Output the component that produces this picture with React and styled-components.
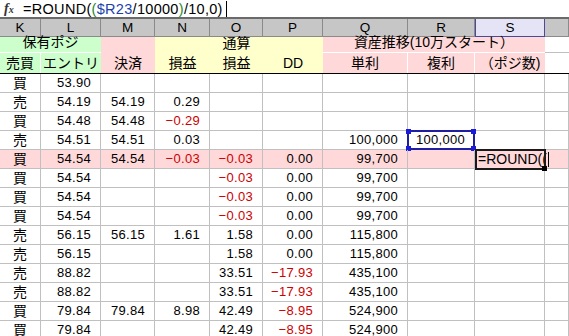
import React from "react";
import styled, { createGlobalStyle } from "styled-components";

const COLS = "41px 60px 54px 55px 53px 60px 85px 67px 70px 1fr";
const GREEN = "#ccffcc";
const PINK = "#ffd9d9";
const YELLOW = "#ffffcc";
const RED = "#cc0000";

const GlobalStyle = createGlobalStyle`
    html, body {
        margin: 0;
        padding: 0;
        background: #fff;
    }
    body {
        font-family: "Liberation Sans", "Noto Sans CJK JP", sans-serif;
        color: #000;
        overflow: hidden;
    }
`;

const letters = ["K", "L", "M", "N", "O", "P", "Q", "R", "S", ""];

const rows = [
    ["買", "53.90", "", "", "", "", "", "", ""],
    ["売", "54.19", "54.19", "0.29", "", "", "", "", ""],
    ["買", "54.48", "54.48", "-0.29", "", "", "", "", ""],
    ["売", "54.51", "54.51", "0.03", "", "", "100,000", "100,000", ""],
    ["買", "54.54", "54.54", "-0.03", "-0.03", "0.00", "99,700", "", ""],
    ["買", "54.54", "", "", "-0.03", "0.00", "99,700", "", ""],
    ["買", "54.54", "", "", "-0.03", "0.00", "99,700", "", ""],
    ["買", "54.54", "", "", "-0.03", "0.00", "99,700", "", ""],
    ["売", "56.15", "56.15", "1.61", "1.58", "0.00", "115,800", "", ""],
    ["売", "56.15", "", "", "1.58", "0.00", "115,800", "", ""],
    ["売", "88.82", "", "", "33.51", "-17.93", "435,100", "", ""],
    ["売", "88.82", "", "", "33.51", "-17.93", "435,100", "", ""],
    ["買", "79.84", "79.84", "8.98", "42.49", "-8.95", "524,900", "", ""],
    ["買", "79.84", "", "", "42.49", "-8.95", "524,900", "", ""],
];

function App() {
    return (
        <>
            <GlobalStyle />
            <Sheet>
                <FormulaBar>
                    <FxIcon>
                        f<small>x</small>
                    </FxIcon>
                    <Formula>
                        =ROUND(<Ref $c="#1f8a1f">(</Ref>
                        <Ref $c="#1c3fae">$R23</Ref>/10000
                        <Ref $c="#1f8a1f">)</Ref>/10,0)
                    </Formula>
                    <Caret />
                </FormulaBar>
                <ColHeader>
                    {letters.map((l, i) => (
                        <ColLetter key={i} $active={l === "S"}>
                            {l}
                        </ColLetter>
                    ))}
                </ColHeader>
                <HeadGrid>
                    <HeadCell $col="1 / 3" $row="1" $bg={GREEN} $line>
                        保有ポジ
                    </HeadCell>
                    <HeadCell $col="1" $row="2" $bg={GREEN} $sep>
                        売買
                    </HeadCell>
                    <HeadCell $col="2" $row="2" $bg={GREEN}>
                        エントリ
                    </HeadCell>
                    <HeadCell $col="3" $row="1 / 3" $bg={PINK}>
                        決済
                    </HeadCell>
                    <HeadCell $col="4" $row="1 / 3" $bg={YELLOW}>
                        損益
                    </HeadCell>
                    <HeadCell $col="5" $row="1" $bg={YELLOW}>
                        通算
                    </HeadCell>
                    <HeadCell $col="5" $row="2" $bg={YELLOW}>
                        損益
                    </HeadCell>
                    <HeadCell $col="6" $row="1 / 3" $bg={YELLOW}>
                        DD
                    </HeadCell>
                    <HeadCell $col="7 / 10" $row="1" $bg={PINK} $line>
                        資産推移(10万スタート）
                    </HeadCell>
                    <HeadCell $col="7" $row="2" $bg={PINK} $sep>
                        単利
                    </HeadCell>
                    <HeadCell $col="8" $row="2" $bg={PINK} $sep>
                        複利
                    </HeadCell>
                    <HeadCell $col="9" $row="2" $bg={PINK}>
                        （ポジ数)
                    </HeadCell>
                    <BlankHead $row="1" />
                    <BlankHead $row="2" />
                </HeadGrid>
                {rows.map((r, ri) => (
                    <Row key={ri} $bg={ri === 4 ? PINK : "#fff"}>
                        {r.map((v, ci) => {
                            const neg = v.startsWith("-");
                            const text = neg ? "−" + v.slice(1) : v;
                            if (ri === 3 && ci === 7) {
                                return (
                                    <Cell key={ci}>
                                        {text}
                                        <SelectBox>
                                            <Handle $pos="tl" />
                                            <Handle $pos="tr" />
                                            <Handle $pos="bl" />
                                            <Handle $pos="br" />
                                        </SelectBox>
                                    </Cell>
                                );
                            }
                            if (ri === 4 && ci === 8) {
                                return (
                                    <EditCell key={ci}>
                                        =ROUND((
                                        <EditCaret />
                                        <EditBox />
                                        <FillHandle />
                                    </EditCell>
                                );
                            }
                            return (
                                <Cell
                                    key={ci}
                                    $center={ci === 0}
                                    $color={neg ? RED : "#000"}
                                >
                                    {text}
                                </Cell>
                            );
                        })}
                        <Cell />
                    </Row>
                ))}
            </Sheet>
        </>
    );
}

export default App;

const Sheet = styled.div`
    width: 569px;
    height: 336px;
    overflow: hidden;
    background: #fff;
`;
const FormulaBar = styled.div`
    height: 17px;
    display: flex;
    align-items: center;
    border-bottom: 2px solid #6a6a6a;
    background: #fff;
`;
const FxIcon = styled.span`
    width: 19px;
    padding-left: 4px;
    font-family: "Liberation Serif", serif;
    font-style: italic;
    font-weight: bold;
    font-size: 14px;
    color: #333;
    small {
        font-size: 10px;
    }
`;
const Formula = styled.span`
    font-size: 14.5px;
    letter-spacing: 0.3px;
    white-space: nowrap;
`;
const Ref = styled.span`
    color: ${(p) => p.$c};
`;
const Caret = styled.span`
    width: 1px;
    height: 16px;
    margin-left: 3px;
    background: #000;
`;
const ColHeader = styled.div`
    display: grid;
    grid-template-columns: ${COLS};
    height: 18px;
    background: #c6c6c6;
`;
const ColLetter = styled.div`
    box-sizing: border-box;
    border-right: 1px solid #8a8a8a;
    border-bottom: 1px solid #8a8a8a;
    background: ${(p) => (p.$active ? "#e4e4f6" : "transparent")};
    ${(p) => p.$active && "border: 1px solid #4a4a96; border-top: none;"}
    text-align: center;
    font-size: 13.5px;
    line-height: 17px;
`;
const HeadGrid = styled.div`
    display: grid;
    grid-template-columns: ${COLS};
    grid-template-rows: 16px 20px;
    border-bottom: 1px solid #000;
`;
const HeadCell = styled.div`
    grid-column: ${(p) => p.$col};
    grid-row: ${(p) => p.$row};
    box-sizing: border-box;
    background: ${(p) => p.$bg};
    border-bottom: ${(p) => (p.$line ? "1px solid #fff" : "none")};
    border-right: ${(p) => (p.$sep ? "1px solid #fff" : "none")};
    display: flex;
    align-items: flex-end;
    justify-content: center;
    font-size: 14px;
    line-height: 17px;
    padding-bottom: 1px;
    white-space: nowrap;
`;
const BlankHead = styled.div`
    grid-column: 10;
    grid-row: ${(p) => p.$row};
    border-bottom: ${(p) => (p.$row === "1" ? "1px solid #c0c0c0" : "none")};
`;
const Row = styled.div`
    display: grid;
    grid-template-columns: ${COLS};
    height: 19px;
    background: ${(p) => p.$bg};
`;
const Cell = styled.div`
    position: relative;
    box-sizing: border-box;
    border-right: 1px solid #c0c0c0;
    border-bottom: 1px solid #c0c0c0;
    text-align: ${(p) => (p.$center ? "center" : "right")};
    padding-right: ${(p) => (p.$center ? "0" : "9px")};
    font-size: ${(p) => (p.$center ? "14px" : "13px")};
    letter-spacing: ${(p) => (p.$center ? "0" : "0.3px")};
    line-height: 18px;
    color: ${(p) => p.$color || "#000"};
    white-space: nowrap;
`;
const SelectBox = styled.div`
    position: absolute;
    left: -1px;
    top: -1px;
    right: -1px;
    bottom: -1px;
    border: 2px solid #1e1ea0;
    pointer-events: none;
`;
const Handle = styled.span`
    position: absolute;
    width: 5px;
    height: 5px;
    background: #1c1cd8;
    ${(p) => (p.$pos[0] === "t" ? "top: -3px;" : "bottom: -3px;")}
    ${(p) => (p.$pos[1] === "l" ? "left: -3px;" : "right: -3px;")}
`;
const EditCell = styled.div`
    position: relative;
    z-index: 2;
    box-sizing: border-box;
    border-right: 1px solid #c0c0c0;
    border-bottom: 1px solid #c0c0c0;
    padding-left: 3px;
    font-size: 14px;
    line-height: 18px;
    white-space: nowrap;
`;
const EditCaret = styled.span`
    display: inline-block;
    width: 1px;
    height: 15px;
    margin-left: 1px;
    vertical-align: -3px;
    background: #000;
`;
const EditBox = styled.div`
    position: absolute;
    left: 0;
    top: -1px;
    right: -2px;
    bottom: -2px;
    border: 2px solid #1a1a1a;
    pointer-events: none;
`;
const FillHandle = styled.span`
    position: absolute;
    right: -3px;
    bottom: -3px;
    width: 5px;
    height: 5px;
    background: #000;
`;
